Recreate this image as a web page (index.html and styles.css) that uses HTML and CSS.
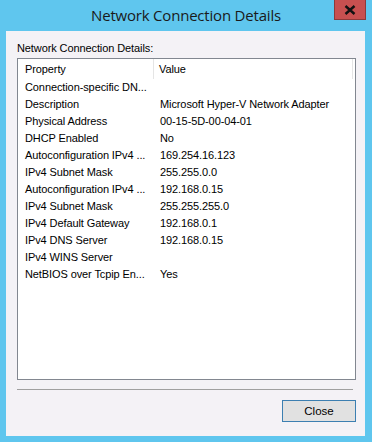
FILE: index.html
```html
<!DOCTYPE html>
<html>
<head>
<meta charset="utf-8">
<link rel="stylesheet" href="styles.css">
</head>
<body>
<div class="window">
  <div class="titlebar">
    <div class="title">Network Connection Details</div>
    <div class="close-x"><svg width="12" height="10" viewBox="0 0 12 10"><path d="M1.5 1 L10.5 9 M10.5 1 L1.5 9" stroke="#111" stroke-width="2.4" fill="none"/></svg></div>
  </div>
  <div class="client">
    <div class="label">Network Connection Details:</div>
    <div class="listbox">
      <div class="header">
        <div class="hcell c1">Property</div>
        <div class="hcell c2">Value</div>
      </div>
      <div class="row"><div class="c1">Connection-specific DN...</div><div class="c2"></div></div>
      <div class="row"><div class="c1">Description</div><div class="c2">Microsoft Hyper-V Network Adapter</div></div>
      <div class="row"><div class="c1">Physical Address</div><div class="c2">00-15-5D-00-04-01</div></div>
      <div class="row"><div class="c1">DHCP Enabled</div><div class="c2">No</div></div>
      <div class="row"><div class="c1">Autoconfiguration IPv4 ...</div><div class="c2">169.254.16.123</div></div>
      <div class="row"><div class="c1">IPv4 Subnet Mask</div><div class="c2">255.255.0.0</div></div>
      <div class="row"><div class="c1">Autoconfiguration IPv4 ...</div><div class="c2">192.168.0.15</div></div>
      <div class="row"><div class="c1">IPv4 Subnet Mask</div><div class="c2">255.255.255.0</div></div>
      <div class="row"><div class="c1">IPv4 Default Gateway</div><div class="c2">192.168.0.1</div></div>
      <div class="row"><div class="c1">IPv4 DNS Server</div><div class="c2">192.168.0.15</div></div>
      <div class="row"><div class="c1">IPv4 WINS Server</div><div class="c2"></div></div>
      <div class="row"><div class="c1">NetBIOS over Tcpip En...</div><div class="c2">Yes</div></div>
    </div>
    <div class="sep"></div>
    <div class="buttons"><button class="btn">Close</button></div>
  </div>
</div>
</body>
</html>
```
FILE: styles.css
```css
html, body {
  margin: 0;
  padding: 0;
}
body {
  width: 372px;
  height: 442px;
  background: #5fc6ee;
  font-family: "Liberation Sans", Arial, sans-serif;
  font-size: 11px;
  letter-spacing: -0.1px;
  color: #000;
  overflow: hidden;
}
.window {
  display: flex;
  flex-direction: column;
  height: 442px;
}
.titlebar {
  position: relative;
  height: 31px;
  display: flex;
  align-items: center;
  justify-content: center;
}
.title {
  font-family: "Open Sans", "Liberation Sans", sans-serif;
  font-size: 15px;
  letter-spacing: -0.2px;
  color: #1a1a1a;
  margin-top: -2px;
}
.close-x {
  position: absolute;
  left: 334px;
  top: 0;
  width: 30px;
  height: 19px;
  background: #c75050;
  border: 1px solid #8c3a3a;
  border-top: none;
  display: flex;
  align-items: center;
  justify-content: center;
}
.client {
  margin: 0 7px 6px 6px;
  height: 405px;
  background: #f4f2f6;
  padding: 10px 9px 0 11px;
  box-sizing: border-box;
  display: flex;
  flex-direction: column;
}
.label {
  height: 15px;
  line-height: 15px;
}
.listbox {
  margin-top: 2px;
  height: 322px;
  border: 1px solid #828790;
  background: #fff;
  box-sizing: border-box;
  display: flex;
  flex-direction: column;
}
.header {
  display: flex;
  height: 20px;
  line-height: 21px;
  padding-left: 1px;
}
.hcell {
  box-sizing: border-box;
}
.header .c1 {
  width: 135px;
  padding-left: 6px;
  border-right: 1px solid #e5e5e5;
}
.header .c2 {
  width: 199px;
  padding-left: 5px;
  border-right: 1px solid #e5e5e5;
}
.row {
  display: flex;
  height: 17px;
  line-height: 17px;
  padding-left: 1px;
}
.row .c1 {
  width: 135px;
  padding-left: 6px;
  box-sizing: border-box;
  white-space: nowrap;
}
.row .c2 {
  padding-left: 6px;
  white-space: nowrap;
}
.sep {
  margin-top: 9px;
  height: 1px;
  background: #a0a0a0;
  margin-right: 3px;
}
.buttons {
  display: flex;
  justify-content: flex-end;
  margin-top: 10px;
}
.btn {
  width: 74px;
  height: 22px;
  background: #e1e1e1;
  border: 1px solid #3c7fb1;
  font-family: "Liberation Sans", Arial, sans-serif;
  font-size: 11.5px;
  color: #000;
  padding: 0;
  margin: 0;
}
```
